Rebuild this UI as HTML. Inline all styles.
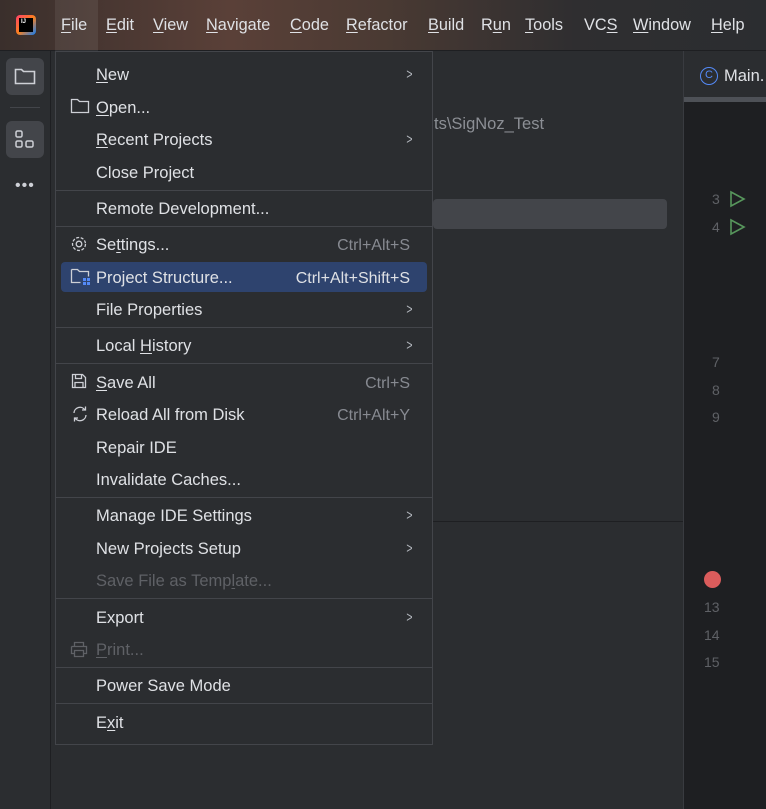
<!DOCTYPE html>
<html><head><meta charset="utf-8"><style>
*{margin:0;padding:0;box-sizing:border-box}
body{width:766px;height:809px;overflow:hidden;background:#2b2d30;font-family:"Liberation Sans",sans-serif;color:#dfe1e5;position:relative}
.a{position:absolute}
.mb{left:0;top:0;width:766px;height:51px;background:linear-gradient(90deg,#3a2f2c 0%,#5a4038 30%,#4a3a33 50%,#2f2e30 75%,#2b2d30 100%);border-bottom:1px solid #1e1f22}
.mb span{position:absolute;top:16px;font-size:16.3px;color:#dfe1e5}
.mb u{text-decoration:underline;text-underline-offset:2px}
.strip{left:0;top:51px;width:51px;height:758px;background:#2b2d30;border-right:1px solid #1e1f22}
.menu{left:55px;top:51px;width:378px;height:694px;background:#2b2d30;border:1px solid #43454a}
.it{position:absolute;left:40px;font-size:16.5px;color:#dfe1e5;white-space:nowrap;margin-top:1px}
.sc{position:absolute;right:22px;font-size:16px;color:#878a91;margin-top:1px}
.ar{position:absolute;right:18px;font-size:15px;color:#b4b8bf;transform:scaleX(.7);margin-top:1px}
.sep{position:absolute;left:0;width:376px;height:1px;background:#43454a}
.dis{color:#5f6166}
u{text-decoration:underline;text-underline-offset:2px}
</style></head><body>
<div class="a mb">
 <div class="a" style="left:16px;top:15px;width:20px;height:20px;border-radius:4px;background:linear-gradient(135deg,#ff3f6c,#fc801d 50%,#087cfa)"></div>
 <div class="a" style="left:19px;top:18px;width:14px;height:14px;background:#000;color:#fff;font-size:6px;font-weight:bold;padding:1px 2px">IJ</div>
 <div class="a" style="left:55px;top:0;width:43px;height:51px;background:rgba(255,255,255,.07)"></div>
 <span style="left:61px"><u>F</u>ile</span><span style="left:106px"><u>E</u>dit</span><span style="left:153px"><u>V</u>iew</span><span style="left:206px"><u>N</u>avigate</span><span style="left:290px"><u>C</u>ode</span><span style="left:346px"><u>R</u>efactor</span><span style="left:428px"><u>B</u>uild</span><span style="left:481px">R<u>u</u>n</span><span style="left:525px"><u>T</u>ools</span><span style="left:584px">VC<u>S</u></span><span style="left:633px"><u>W</u>indow</span><span style="left:711px"><u>H</u>elp</span>
</div>
<div class="a strip">
 <div class="a" style="left:6px;top:7px;width:38px;height:37px;border-radius:6px;background:#43454a"></div>
 <svg class="a" style="left:14px;top:16px" width="22" height="18" viewBox="0 0 22 18"><path d="M1.5 2.5h6l2 2h11v12h-19z" fill="none" stroke="#ced0d6" stroke-width="1.6"/></svg>
 <div class="a" style="left:10px;top:56px;width:30px;height:1px;background:#43454a"></div>
 <div class="a" style="left:6px;top:70px;width:38px;height:37px;border-radius:6px;background:#43454a"></div>
 <svg class="a" style="left:15px;top:79px" width="20" height="20" viewBox="0 0 20 20" fill="none" stroke="#ced0d6" stroke-width="1.5"><rect x="1" y="1" width="6" height="6" rx="1.5"/><rect x="1" y="11" width="6" height="6" rx="1.5"/><rect x="11" y="11" width="7" height="6" rx="1.5"/></svg>
 <div class="a" style="left:15px;top:126px;color:#ced0d6;font-size:16px;letter-spacing:1px">•••</div>
</div>
<div class="a" style="left:52px;top:51px;width:632px;height:758px;background:#2b2d30"></div>
<div class="a" style="left:433px;top:521px;width:251px;height:1px;background:#1e1f22"></div>
<div class="a" style="left:434px;top:115px;color:#8c8f95;font-size:16.5px">ts\SigNoz_Test</div>
<div class="a" style="left:433px;top:199px;width:234px;height:30px;border-radius:4px;background:#43454a"></div>
<div class="a" style="left:683px;top:51px;width:83px;height:758px;background:#1e1f22;border-left:1px solid #393b40"></div>
<div class="a" style="left:684px;top:51px;width:82px;height:50px;background:#2b2d30"></div>
<div class="a" style="left:684px;top:97px;width:82px;height:5px;background:#4e5157"></div>
<div class="a" style="left:700px;top:67px;width:18px;height:18px;border-radius:50%;border:1.5px solid #548af7;color:#548af7;font-size:11px;text-align:center;line-height:15px">C</div>
<div class="a" style="left:724px;top:67px;font-size:16.5px;color:#dfe1e5">Main.</div>
<div class="a" style="left:712px;top:185px;color:#5f6166;font-size:14px;line-height:28px">3<br>4</div>
<svg class="a" style="left:729px;top:190px" width="18" height="46"><path d="M2 2l13 7-13 7z M2 30l13 7-13 7z" fill="none" stroke="#57965c" stroke-width="1.6"/></svg>
<div class="a" style="left:712px;top:349px;color:#5f6166;font-size:14px;line-height:27.5px">7<br>8<br>9</div>
<div class="a" style="left:704px;top:571px;width:17px;height:17px;border-radius:50%;background:#db5c5c"></div>
<div class="a" style="left:704px;top:594px;color:#5f6166;font-size:14px;line-height:27.5px">13<br>14<br>15</div>

<div class="a menu">
 <div class="it" style="top:13px"><u>N</u>ew</div><div class="ar" style="top:13px">&gt;</div>
 <svg class="a" style="left:14px;top:46px" width="20" height="16"><path d="M1.5 1.5h6l2 2h9v11h-17z" fill="none" stroke="#ced0d6" stroke-width="1.3"/></svg>
 <div class="it" style="top:46px"><u>O</u>pen...</div>
 <div class="it" style="top:78px"><u>R</u>ecent Projects</div><div class="ar" style="top:78px">&gt;</div>
 <div class="it" style="top:111px">Close Project</div>
 <div class="sep" style="top:138px"></div>
 <div class="it" style="top:147px">Remote Development...</div>
 <div class="sep" style="top:174px"></div>
 <svg class="a" style="left:14px;top:183px" width="18" height="18" viewBox="0 0 18 18"><circle cx="9" cy="9" r="2.8" fill="none" stroke="#ced0d6" stroke-width="1.3"/><circle cx="9" cy="9" r="6.5" fill="none" stroke="#ced0d6" stroke-width="1.3" stroke-dasharray="3 1.6"/></svg>
 <div class="it" style="top:183px">Se<u>t</u>tings...</div><div class="sc" style="top:184px">Ctrl+Alt+S</div>
 <div class="a" style="left:5px;top:210px;width:366px;height:30px;border-radius:4px;background:#2e436e"></div>
 <svg class="a" style="left:14px;top:216px" width="22" height="18"><path d="M1.5 1.5h6l2 2h9v5 M1.5 1.5v13h9" fill="none" stroke="#ced0d6" stroke-width="1.3"/><rect x="13" y="10" width="3" height="3" fill="#548af7"/><rect x="17" y="10" width="3" height="3" fill="#548af7"/><rect x="13" y="14" width="3" height="3" fill="#548af7"/><rect x="17" y="14" width="3" height="3" fill="#548af7"/></svg>
 <div class="it" style="top:216px">Project Structure...</div><div class="sc" style="top:217px;color:#dfe1e5">Ctrl+Alt+Shift+S</div>
 <div class="it" style="top:248px">File Properties</div><div class="ar" style="top:248px">&gt;</div>
 <div class="sep" style="top:275px"></div>
 <div class="it" style="top:284px">Local <u>H</u>istory</div><div class="ar" style="top:284px">&gt;</div>
 <div class="sep" style="top:311px"></div>
 <svg class="a" style="left:15px;top:321px" width="16" height="16"><path d="M1.5 1.5h10l3 3v10h-13z M4.5 1.5v4h6v-4 M4 14.5v-5h8v5" fill="none" stroke="#ced0d6" stroke-width="1.3"/></svg>
 <div class="it" style="top:321px"><u>S</u>ave All</div><div class="sc" style="top:322px">Ctrl+S</div>
 <svg class="a" style="left:14px;top:353px" width="20" height="18"><path d="M4 8a6 6 0 0 1 11-3 M16 10a6 6 0 0 1-11 3 M12 5h3.5V1.5 M8 13H4.5v3.5" fill="none" stroke="#ced0d6" stroke-width="1.3"/></svg>
 <div class="it" style="top:353px">Reload All from Disk</div><div class="sc" style="top:354px">Ctrl+Alt+Y</div>
 <div class="it" style="top:386px">Repair IDE</div>
 <div class="it" style="top:418px">Invalidate Caches...</div>
 <div class="sep" style="top:445px"></div>
 <div class="it" style="top:454px">Manage IDE Settings</div><div class="ar" style="top:454px">&gt;</div>
 <div class="it" style="top:487px">New Projects Setup</div><div class="ar" style="top:487px">&gt;</div>
 <div class="it dis" style="top:519px">Save File as Temp<u>l</u>ate...</div>
 <div class="sep" style="top:546px"></div>
 <div class="it" style="top:556px">Export</div><div class="ar" style="top:556px">&gt;</div>
 <svg class="a" style="left:14px;top:589px" width="18" height="17"><path d="M4.5 5.5v-4h9v4 M1.5 5.5h15v7h-3 M4.5 12.5h-3v-7 M4.5 9.5h9v6h-9z" fill="none" stroke="#5f6166" stroke-width="1.3"/></svg>
 <div class="it dis" style="top:588px"><u>P</u>rint...</div>
 <div class="sep" style="top:615px"></div>
 <div class="it" style="top:624px">Power Save Mode</div>
 <div class="sep" style="top:651px"></div>
 <div class="it" style="top:661px">E<u>x</u>it</div>
</div>
</body></html>
